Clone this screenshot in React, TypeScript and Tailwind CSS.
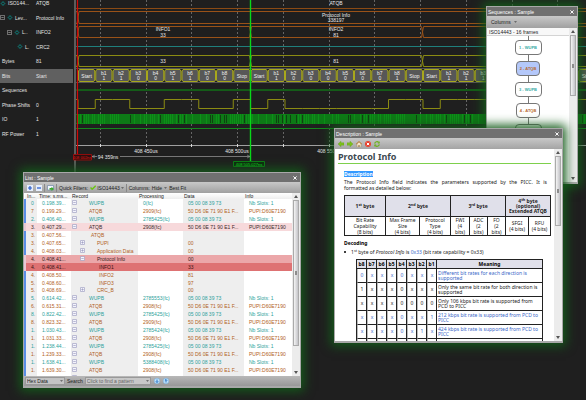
import type { ReactNode } from "react";

type Bit = { label: string; value?: string };

const CELL = 17.25;
const ORIGIN = 78;

const frames = ["11001100", "10000001", "11101001"];

const bits: Bit[] = frames.flatMap((frame) => [
  { label: "Start" },
  ...frame.split("").map((value, i) => ({ label: `b${i + 1}`, value })),
  { label: "Stop" },
]);

const gridLines = [100, 146, 191, 237, 283, 329, 374, 420, 466, 512, 557];

const signals = [
  { name: "ISO144...", value: "ATQB", pad: "pl-0", gear: true },
  { name: "Lev...", value: "Protocol Info", pad: "pl-0", box: true, gear: true },
  { name: "L..", value: "INFO2", pad: "pl-[7px]", box: true, gear: true },
  { name: "L.", value: "CRC2", pad: "pl-[17px]", gear: true },
  { name: "Bytes", value: "81", pad: "pl-[2px]" },
  { name: "Bits", value: "Start", pad: "pl-[2px]", active: true },
  { name: "Sequences", value: "", pad: "pl-[2px]" },
  { name: "Phase Shifts", value: "0", pad: "pl-[2px]" },
  { name: "IO", value: "1", pad: "pl-[2px]" },
  { name: "RF Power", value: "1", pad: "pl-[2px]" },
];

const WUPB_DATA = "05 00 08 39 73";
const ATQB_DATA = "50 D6 0E 71 90 E1 F...";
const SLOTS = "Nb Slots: 1";
const PUPI = "PUPI:D60E7190";

// index, time, level, record, processing, data, info, tone
const records: [string, string, number, string, string, string, string, string][] = [
  ["0", "0.198.39...", 1, "WUPB", "0(fc)", WUPB_DATA, SLOTS, "teal"],
  ["7", "0.199.29...", 1, "ATQB", "2909(fc)", ATQB_DATA, PUPI, "orange"],
  ["2.", "0.406.40...", 1, "WUPB", "2785425(fc)", WUPB_DATA, SLOTS, "teal"],
  ["3.", "0.407.29...", 1, "ATQB", "2908(fc)", ATQB_DATA, PUPI, "pink"],
  ["3.", "0.407.56...", 2, "ATQB", "", "", "", "orange"],
  ["3.", "0.407.65...", 3, "PUPI", "", "00", "", "orange"],
  ["4.", "0.408.03...", 3, "Application Data", "", "00", "", "orange"],
  ["4.", "0.408.41...", 3, "Protocol Info", "", "00", "", "rose"],
  ["4.", "0.408.41...", 4, "INFO1", "", "33", "", "red"],
  ["4.", "0.408.50...", 4, "INFO2", "", "81", "", "orange"],
  ["5.", "0.408.60...", 4, "INFO3", "", "97", "", "orange"],
  ["5.", "0.408.69...", 3, "CRC_B", "", "00", "", "orange"],
  ["5.", "0.614.42...", 1, "WUPB", "2785553(fc)", WUPB_DATA, SLOTS, "teal"],
  ["6.", "0.615.31...", 1, "ATQB", "2908(fc)", ATQB_DATA, PUPI, "orange"],
  ["8.", "0.822.42...", 1, "WUPB", "2785425(fc)", WUPB_DATA, SLOTS, "teal"],
  ["8.", "0.823.32...", 1, "ATQB", "2909(fc)", ATQB_DATA, PUPI, "orange"],
  ["1.", "1.030.43...", 1, "WUPB", "2785424(fc)", WUPB_DATA, SLOTS, "teal"],
  ["1.", "1.031.33...", 1, "ATQB", "2908(fc)", ATQB_DATA, PUPI, "orange"],
  ["1.", "1.238.44...", 1, "WUPB", "2785425(fc)", WUPB_DATA, SLOTS, "teal"],
  ["1.", "1.239.33...", 1, "ATQB", "2908(fc)", ATQB_DATA, PUPI, "orange"],
  ["1.", "1.638.41...", 1, "WUPB", "5388408(fc)", WUPB_DATA, SLOTS, "teal"],
  ["1.", "1.639.30...", 1, "ATQB", "2908(fc)", ATQB_DATA, PUPI, "orange"],
  ["1.", "1.846.40...", 1, "WUPB", "2785553(fc)", WUPB_DATA, SLOTS, "teal"],
];

const toneText: Record<string, string> = {
  teal: "text-[#2c9f9b]",
  orange: "text-[#b05e22]",
  pink: "text-[#3a2a2a] bg-[#f7d9db]",
  rose: "text-[#3a2020] bg-[#eba7a9]",
  red: "text-[#3a1515] bg-[#de7273]",
};

const levelPad: Record<number, string> = {
  1: "pl-[18px]",
  2: "pl-[20px]",
  3: "pl-[26px]",
  4: "pl-[28px]",
};

const meanings: [string, string, boolean][] = [
  ["0xxx0xxx", "Different bit rates for each direction is supported", true],
  ["1xxx0xxx", "Only the same bit rate for both direction is supported", false],
  ["xxxx0000", "Only 106 kbps bit rate is supported from PCD to PICC", false],
  ["xxxx0xx1", "212 kbps bit rate is supported from PCD to PICC", true],
  ["xxxx0x1x", "424 kbps bit rate is supported from PCD to PICC", true],
  ["xxxx01xx", "848 kbps bit rate is supported from PCD to PICC", true],
];

function Gear() {
  return (
    <svg viewBox="0 0 6 6" className="h-[5px] w-[6px] shrink-0" fill="none" stroke="#0f7f7c">
      <circle cx="3" cy="3" r="1.7" strokeWidth="0.9" />
      <path d="M3 0v1M3 5v1M0 3h1M5 3h1M1 1l.6.6M5 1l-.6.6M1 5l.6-.6M5 5l-.6-.6" strokeWidth="0.8" />
    </svg>
  );
}

function SignalList() {
  return (
    <div className="-mt-1 flex h-[145px] w-[73px] shrink-0 flex-col text-[#e4e4e4]">
      {signals.map((s) => (
        <div key={s.name} className={`flex flex-1 items-center ${s.active ? "bg-[#606060]" : ""}`}>
          <div className={`flex w-9 shrink-0 items-center gap-[2px] whitespace-nowrap ${s.pad}`}>
            {s.box && (
              <button aria-label="Collapse">
                <svg viewBox="0 0 5 5" className="h-[5px] w-[5px]" fill="none" stroke="#a0a0a0" strokeWidth="0.7">
                  <path d="M.4 .4H4.6V4.6H.4ZM1.3 2.5H3.7" />
                </svg>
              </button>
            )}
            {s.gear && <Gear />}
            <span>{s.name}</span>
          </div>
          <span className="whitespace-nowrap">{s.value}</span>
        </div>
      ))}
    </div>
  );
}

function lane(top: number, bottom: number, cuts: number[]) {
  let upper = `M76 ${top}`;
  let lower = `M76 ${bottom}`;
  cuts.forEach((x) => {
    upper += `H${x - 1}L${x + 1} ${bottom}M${x + 1} ${top}`;
    lower += `H${x - 1}L${x + 1} ${top}M${x + 1} ${bottom}`;
  });
  return `${upper}H586${lower}H586`;
}

function phasePath() {
  let d = "M76 99.5H78V108.5";
  bits.forEach((bit, i) => {
    const high = bit.label === "Stop" || bit.value === "1";
    d += `V${high ? 99.5 : 108.5}H${ORIGIN + (i + 1) * CELL}`;
  });
  return d;
}

function Waveforms() {
  const cuts = [78, 250.5, 422.5];
  const stripes = Array.from({ length: 255 }, (_, i) => ({ x: 76 + i * 2, k: (i * 37 + ((i * i) % 11) * 5) % 13 }));
  return (
    <svg
      viewBox="73 0 513 172"
      className="h-auto min-w-0 flex-1"
      fill="none"
      fontSize="5"
      textAnchor="middle"
      aria-label="Signal timeline"
    >
      <g stroke="#777" strokeWidth="0.8" strokeDasharray="2 2">
        {gridLines.map((x) => (
          <path key={x} d={`M${x + 0.5} 0V145`} />
        ))}
      </g>
      <path d="M76 8.5H586" stroke="#8a4a14" />
      <path d={lane(11.5, 23.5, [78])} stroke="#9a5218" />
      <path d={lane(26.5, 37.5, cuts)} stroke="#9a5218" />
      <path d="M76 46.5H586" stroke="#1f7f7c" />
      <path d={lane(55.5, 66.5, cuts)} stroke="#8c8c12" />
      <path d="M76 68.5H586M76 82.5H586" stroke="#555" />
      <g>
        {bits.map((bit, i) => {
          const x = ORIGIN + i * CELL;
          const mid = x + CELL / 2;
          return (
            <g key={i}>
              <path
                d={`M${x + 1.5} 69.5H${x + CELL - 1.5}L${x + CELL - 0.5} 71V80L${x + CELL - 1.5} 81.5H${x + 1.5}L${x + 0.5} 80V71Z`}
                fill="#575757"
                stroke="#a8a81c"
              />
              {bit.value ? (
                <g fill="#f0f0f0">
                  <text x={mid} y="74.5">{bit.label}</text>
                  <text x={mid} y="80">{bit.value}</text>
                </g>
              ) : (
                <text x={mid} y="77.5" fill="#f0f0f0">{bit.label}</text>
              )}
            </g>
          );
        })}
      </g>
      <path d="M76 90H586" stroke="#145c18" strokeWidth="2" />
      <path d={phasePath()} stroke="#8c8c12" />
      <path d="M76 114H586V124H76Z" fill="#0d7a16" />
      {stripes.map(({ x, k }) =>
        k < 2 ? (
          <path key={x} d={`M${x + 0.5} 115V123`} stroke="#10340f" strokeWidth="0.8" />
        ) : k < 8 ? (
          <path key={x} d={`M${x + 0.5} 114V124`} stroke="#0d9c1a" strokeWidth="0.7" />
        ) : null
      )}
      <path d="M76 128.5H586" stroke="#14881c" />
      <path d="M76 145.5H586" stroke="#a0a0a0" />
      <g stroke="#d8d8d8">
        {gridLines.map((x) => (
          <path key={x} d={`M${x + 0.5} 144V147`} />
        ))}
      </g>
      <path d="M92 156.5H250" stroke="#777" />
      <path d="M95 155L92 156.5L95 158M247 155L250 156.5L247 158" stroke="#999" strokeWidth="0.6" />
      <path d="M97 153H120V160H97Z" fill="#1f1f1f" />
      <g fill="#e8e8e8">
        <text x="163" y="31">INFO1</text>
        <text x="163" y="37">33</text>
        <text x="163" y="63">33</text>
        <text x="336" y="5">ATQB</text>
        <text x="336" y="17">Protocol Info</text>
        <text x="336" y="22">338197</text>
        <text x="336" y="31">INFO2</text>
        <text x="336" y="37">81</text>
        <text x="336" y="63">81</text>
        <text x="146" y="153">408 450us</text>
        <text x="237" y="153">408 500us</text>
        <text x="329" y="153">408 550us</text>
        <text x="108" y="158.5">94 359ns</text>
      </g>
      <path d="M75 0V172" stroke="#777" strokeWidth="1.4" />
      <path d="M77.5 0V154" stroke="#d00808" strokeWidth="1.2" />
      <path d="M73.5 154.5H91.5V160H73.5Z" fill="#2a1010" stroke="#c00808" strokeWidth="0.7" />
      <text x="82" y="159" fill="#e01010" fontSize="4">408 002ns</text>
      <path d="M250.5 0V161" stroke="#08d818" strokeWidth="1.4" />
      <path d="M233.5 161.5H264.5V166.5H233.5Z" fill="#0c2a0e" stroke="#08a818" strokeWidth="0.7" />
      <text x="249" y="165.5" fill="#10e020" fontSize="4">408 505.027ns</text>
    </svg>
  );
}

function Window({ title, className, children }: { title: string; className: string; children: ReactNode }) {
  return (
    <section
      className={`absolute flex flex-col overflow-hidden border border-b-2 border-[#a8a8a8] bg-white shadow-[0_0_10px_3px_#145c1a] ${className}`}
    >
      <header className="flex h-[9px] shrink-0 items-center justify-between bg-[#707070] px-px text-white">
        <h2>{title}</h2>
        <button aria-label={`Close ${title}`} className="px-[2px]">
          <svg viewBox="0 0 5 5" className="h-[4px] w-[4px]" stroke="#fff" strokeWidth="1.2">
            <path d="M.5 .5L4.5 4.5M4.5 .5L.5 4.5" />
          </svg>
        </button>
      </header>
      {children}
    </section>
  );
}

function Scrollbar({ thumb }: { thumb: string }) {
  return (
    <div className="flex w-2 shrink-0 flex-col items-center justify-between bg-[#ececec] py-[2px]">
      <svg viewBox="0 0 4 3" className="h-[3px] w-[4px]">
        <path d="M0 3L2 0L4 3Z" fill="#555" />
      </svg>
      <div
        className={`mb-auto mt-[2px] flex w-[6px] flex-col items-center justify-center border border-[#aaa] bg-linear-to-r from-[#f4f4f4] to-[#c4c4c8] ${thumb}`}
      >
        <span className="h-[4px] w-[2px] bg-[#8c8c8c]" />
      </div>
      <svg viewBox="0 0 4 3" className="h-[3px] w-[4px]">
        <path d="M0 0L2 3L4 0Z" fill="#555" />
      </svg>
    </div>
  );
}

function Caret() {
  return (
    <svg viewBox="0 0 4 2" className="h-[2px] w-[3px] shrink-0">
      <path d="M0 0L2 2L4 0Z" fill="#555" />
    </svg>
  );
}

function SequencesWindow() {
  const nodes = ["1 - WUPB", "2 - ATQB", "3 - WUPB", "4 - ATQB", "5 - WUPB", "6 - ATQB", "7 - WUPB"];
  return (
    <Window title="Sequences : Sample" className="left-[486px] top-[6px] h-[178px] w-[92px]">
      <div className="flex h-3 shrink-0 items-center bg-linear-to-b from-[#c8c8c8] to-[#a0a0a0] px-1">
        <button className="flex items-center gap-[3px]">
          Columns <Caret />
        </button>
      </div>
      <div className="flex min-h-0 flex-1">
        <div className="flex min-w-0 flex-1 flex-col">
          <h3 className="h-2 shrink-0 border-b border-[#d4d4d4] bg-[#f8f8f8] px-[2px] leading-[8px]">ISO14443 - 16 frames</h3>
          <div className="flex flex-1 flex-col items-center overflow-hidden">
            {nodes.map((node, i) => (
              <div key={node} className="flex shrink-0 flex-col items-center">
                <span className={`border-l border-dashed border-[#777] ${i === 0 ? "h-1" : "h-[6px]"}`} />
                <button
                  className={`h-[15px] rounded-[4px] border border-[#777] text-[4px] font-bold ${
                    i % 2 ? "w-6 text-[#b8692f]" : "w-[27px] text-[#3aaaa6]"
                  } ${i === 1 ? "bg-[#b4c8fa]" : "bg-white"}`}
                >
                  {node}
                </button>
              </div>
            ))}
          </div>
        </div>
        <Scrollbar thumb="h-[61px]" />
      </div>
    </Window>
  );
}

function ListToolbar() {
  return (
    <div className="flex h-[11px] shrink-0 items-center gap-[2px] bg-linear-to-b from-[#c8c8c8] to-[#a0a0a0] px-[3px]">
      <button aria-label="Expand all">
        <svg viewBox="0 0 6 6" className="h-[6px] w-[6px]">
          <path d="M0 0H6V6H0Z" fill="#e6eefc" />
          <path d="M3 1V5M1 3H5" stroke="#2458c8" strokeWidth="1.2" />
        </svg>
      </button>
      <button aria-label="Collapse all" className="pl-px">
        <svg viewBox="0 0 6 6" className="h-[6px] w-[6px]">
          <path d="M0 0H6V6H0Z" fill="#e6eefc" />
          <path d="M1 3H5" stroke="#2458c8" strokeWidth="1.2" />
        </svg>
      </button>
      <span className="h-2 border-l border-[#888]" />
      <button aria-label="Export">
        <svg viewBox="0 0 7 6" className="h-[6px] w-[7px]">
          <path d="M.5 .5H6.5V5H.5Z" fill="#f4f8ff" stroke="#7088a8" strokeWidth="0.7" />
          <path d="M2.5 3H4.5V1.8L7 4L4.5 6V4.8H2.5Z" fill="#3aa82c" />
        </svg>
      </button>
      <span className="h-2 border-l border-[#888]" />
      <span>Quick Filters:</span>
      <button className="flex items-center gap-px">
        <svg viewBox="0 0 6 5" className="h-[5px] w-[6px]" fill="none">
          <path d="M.5 2.5L2.2 4.2L5.7 .8" stroke="#6cc414" strokeWidth="1.5" />
        </svg>
        ISO14443
        <Caret />
      </button>
      <span className="h-2 border-l border-[#888]" />
      <span>Columns:</span>
      <button className="flex items-center gap-[2px]">
        Hide <Caret />
      </button>
      <button>Best Fit</button>
    </div>
  );
}

function Expander({ open }: { open: boolean }) {
  return (
    <button aria-label={open ? "Collapse" : "Expand"} className="block">
      <svg viewBox="0 0 5 5" className="h-[5px] w-[5px]" fill="#f4f4fc" stroke="#9c9cc0" strokeWidth="0.7">
        <rect x=".4" y=".4" width="4.2" height="4.2" rx="0.6" />
        <path d={open ? "M1.3 2.5H3.7" : "M1.3 2.5H3.7M2.5 1.3V3.7"} />
      </svg>
    </button>
  );
}

function ListWindow() {
  return (
    <Window title="List : Sample" className="left-[23px] top-[172px] h-[216px] w-[278px]">
      <ListToolbar />
      <div className="flex min-h-0 flex-1">
        <div className="min-w-0 flex-1 overflow-hidden">
          <table className="h-[189px] w-full table-fixed border-collapse whitespace-nowrap text-left leading-[6px]">
            <colgroup>
              <col className="w-[12px]" />
              <col className="w-[34px]" />
              <col className="w-[67px]" />
              <col className="w-[45px]" />
              <col className="w-[61px]" />
              <col />
            </colgroup>
            <thead className="bg-linear-to-b from-white to-[#eeeeee]">
              <tr>
                <th className="pl-[2px] font-normal">In...</th>
                <th className="pl-[2px] font-normal">Time: s.ms...</th>
                <th className="pl-px font-normal">Record</th>
                <th className="pl-px font-normal">Processing</th>
                <th className="pl-px font-normal">Data</th>
                <th className="pl-px font-normal">Info</th>
              </tr>
            </thead>
            <tbody>
              {records.map(([index, time, level, record, processing, data, info, tone], i) => {
                const marked = tone === "pink" || tone === "rose" || tone === "red";
                const shade = marked ? "" : "bg-[#eeeeee]";
                return (
                  <tr key={i} className={toneText[tone]}>
                    <td className={`border-l-2 pl-[5px] ${marked ? "border-[#e9c9d4]" : "border-[#5a8ee6]"} ${shade}`}>
                      {index}
                    </td>
                    <td className="pl-[5px]">{time}</td>
                    <td className={`relative ${shade} ${levelPad[level]}`}>
                      {level === 1 && (
                        <span className="absolute left-px top-px">
                          <Expander open />
                        </span>
                      )}
                      {level === 3 && (
                        <span className="absolute left-[9px] top-px">
                          <Expander open={record === "Protocol Info"} />
                        </span>
                      )}
                      {record}
                    </td>
                    <td className="pl-[5px]">{processing}</td>
                    <td className={`pl-[5px] ${shade}`}>{data}</td>
                    <td className="pl-[5px]">{info}</td>
                  </tr>
                );
              })}
            </tbody>
          </table>
        </div>
        <Scrollbar thumb="h-[146px]" />
      </div>
      <footer className="flex h-[10px] shrink-0 items-center gap-[2px] bg-linear-to-b from-[#b8b8b8] to-[#989898] px-px">
        <div className="relative flex items-center">
          <select aria-label="Search type" className="h-2 w-10 appearance-none border border-[#999] bg-[#c4c4c4] px-px leading-[6px]">
            <option>Hex Data</option>
          </select>
          <span className="pointer-events-none absolute right-[2px]">
            <Caret />
          </span>
        </div>
        <label htmlFor="pattern">Search</label>
        <div className="relative flex items-center">
          <input
            id="pattern"
            placeholder="Click to find a pattern"
            className="h-2 w-[66px] border border-[#999] bg-[#c8c8c8] px-px placeholder:text-[#666]"
          />
          <span className="pointer-events-none absolute right-[2px]">
            <Caret />
          </span>
        </div>
        {["M3 1.5V4.5M1.8 3.3L3 4.5L4.2 3.3", "M3 4.5V1.5M1.8 2.7L3 1.5L4.2 2.7"].map((d, i) => (
          <button key={d} aria-label={i ? "Find previous" : "Find next"} className="pl-px">
            <svg viewBox="0 0 6 6" className="h-[6px] w-[6px]" fill="none">
              <circle cx="3" cy="3" r="2.8" fill="#c4e4fa" stroke="#6aa8dc" strokeWidth="0.5" />
              <path d={d} stroke="#1c6cc0" strokeWidth="0.9" />
            </svg>
          </button>
        ))}
      </footer>
    </Window>
  );
}

function DescriptionToolbar() {
  return (
    <div className="flex h-[11px] shrink-0 items-center gap-[3px] bg-linear-to-b from-[#c8c8c8] to-[#a4a4a4] px-[3px]">
      <button aria-label="Back">
        <svg viewBox="0 0 6 6" className="h-[6px] w-[6px]">
          <path d="M0 3L3 .2V1.8H6V4.2H3V5.8Z" fill="#7cc01c" stroke="#5a9410" strokeWidth="0.3" />
        </svg>
      </button>
      <button aria-label="Forward">
        <svg viewBox="0 0 6 6" className="h-[6px] w-[6px]">
          <path d="M6 3L3 .2V1.8H0V4.2H3V5.8Z" fill="#7cc01c" stroke="#5a9410" strokeWidth="0.3" />
        </svg>
      </button>
      <button aria-label="Home">
        <svg viewBox="0 0 6 6" className="h-[6px] w-[6px]">
          <path d="M1 3V6H5V3L3 1Z" fill="#f4e4c4" stroke="#a0804c" strokeWidth="0.4" />
          <path d="M0 3.2L3 .5L6 3.2" fill="none" stroke="#c07830" strokeWidth="0.9" />
          <path d="M2.5 4H3.5V6H2.5Z" fill="#806038" />
        </svg>
      </button>
      <button aria-label="Stop">
        <svg viewBox="0 0 6 6" className="h-[6px] w-[6px]">
          <circle cx="3" cy="3" r="3" fill="#e8402c" />
          <path d="M1.8 1.8L4.2 4.2M4.2 1.8L1.8 4.2" stroke="#fff" strokeWidth="1" />
        </svg>
      </button>
      <button aria-label="Refresh">
        <svg viewBox="0 0 6 6" className="h-[6px] w-[6px]" fill="none" stroke="#6cb41c" strokeWidth="1.2">
          <path d="M.7 2.6A2.3 2.3 0 0 1 4.8 1.6M5.3 3.4A2.3 2.3 0 0 1 1.2 4.4" />
          <path d="M3.8 2.2H5.4V.6M2.2 3.8H.6V5.4" strokeWidth="0.8" />
        </svg>
      </button>
    </div>
  );
}

function DescriptionWindow() {
  const cell = "border border-[#222] p-0 font-normal";
  const head = "border border-[#222] bg-[#e0e0ea] p-0 font-bold";
  return (
    <Window title="Description : Sample" className="left-[334px] top-[128px] h-[215px] w-[229px]">
      <DescriptionToolbar />
      <div className="flex min-h-0 flex-1">
        <article className="min-w-0 flex-1 overflow-hidden px-[3px] pt-[2px] font-['Noto_Sans',sans-serif] leading-[6px] text-[#222]">
          <h1 className="border-b border-[#7ed04c] pb-px text-[9px] font-bold leading-[11px] text-[#3c4850]">
            Protocol Info
          </h1>
          <div className="pl-[6px]">
            <h3 className="mt-[7px] flex font-bold">
              <span className="bg-[#3399ff] text-white">Description</span>
            </h3>
            <p className="mr-1 mt-[2px] text-justify">
              The Protocol Info field indicates the parameters supported by the PICC. It is{" "}
              <span className="whitespace-nowrap">formatted as detailed below:</span>
            </p>
            <table className="mt-[4px] w-full table-fixed border-collapse border border-[#222] text-center">
              <colgroup>
                <col className="w-[41px]" />
                <col className="w-[34px]" />
                <col className="w-[31px]" />
                <col className="w-[19px]" />
                <col className="w-[18px]" />
                <col className="w-[18px]" />
                <col className="w-[23px]" />
                <col />
              </colgroup>
              <thead>
                <tr className="h-[21px]">
                  <th className={head}>1<sup>st</sup> byte</th>
                  <th className={head} colSpan={2}>2<sup>nd</sup> byte</th>
                  <th className={head} colSpan={3}>3<sup>rd</sup> byte</th>
                  <th className={`${head} leading-[5px]`} colSpan={2}>
                    4<sup>th</sup> byte
                    <br />
                    (optional)
                    <br />
                    Extended ATQB
                  </th>
                </tr>
              </thead>
              <tbody>
                <tr>
                  <td className={cell}>Bit Rate<br />Capability<br />(8 bits)</td>
                  <td className={cell}>Max Frame<br />Size<br />(4 bits)</td>
                  <td className={cell}>Protocol<br />Type<br />(4 bits)</td>
                  <td className={cell}>FWI<br />(4<br />bits)</td>
                  <td className={cell}>ADC<br />(2<br />bits)</td>
                  <td className={cell}>FO<br />(2<br />bits)</td>
                  <td className={cell}>SFGI<br />(4 bits)</td>
                  <td className={cell}>RFU<br />(4 bits)</td>
                </tr>
              </tbody>
            </table>
            <h3 className="mt-[4px] font-bold text-black">Decoding</h3>
            <ul className="mt-[3px]">
              <li className="flex items-center gap-[5px]">
                <span className="h-[2px] w-[2px] rounded-full bg-black" />
                <span>
                  1<sup>st</sup> byte of <em>Protocol Info</em> is <span className="text-[#3a68c8]">0x33</span> (bit rate
                  capability = 0x33)
                </span>
              </li>
            </ul>
            <table className="ml-3 mt-[4px] w-[187px] table-fixed border-separate border-spacing-0 border border-[#222]">
              <colgroup>
                {Array.from({ length: 8 }, (_, i) => (
                  <col key={i} className="w-[10px]" />
                ))}
                <col />
              </colgroup>
              <thead>
                <tr className="h-[9px] bg-[#e0e0ea] text-black">
                  {[8, 7, 6, 5, 4, 3, 2, 1].map((n) => (
                    <th key={n} className="border-b border-r border-[#222] p-0">b{n}</th>
                  ))}
                  <th className="border-b border-[#222] p-0">Meaning</th>
                </tr>
              </thead>
              <tbody>
                {meanings.map(([mask, text, blue]) => (
                  <tr key={mask} className={`h-[14px] leading-[5px] ${blue ? "text-[#3a68c8]" : ""}`}>
                    {mask.split("").map((c, i) => (
                      <td key={i} className="border-b border-l border-r border-b-[#222] border-l-[#bbb] border-r-[#222] p-0 text-center">
                        {c}
                      </td>
                    ))}
                    <td className="border-b border-[#222] px-px py-0">{text}</td>
                  </tr>
                ))}
              </tbody>
            </table>
          </div>
        </article>
        <Scrollbar thumb="h-[70px]" />
      </div>
    </Window>
  );
}

export default function App() {
  return (
    <main className="relative min-h-screen overflow-hidden bg-[#1f1f1f] font-['Liberation_Sans',Arial,sans-serif] text-[5px] leading-[6px] text-[#222]">
      <div className="flex items-start">
        <SignalList />
        <Waveforms />
      </div>
      <ListWindow />
      <SequencesWindow />
      <DescriptionWindow />
    </main>
  );
}
